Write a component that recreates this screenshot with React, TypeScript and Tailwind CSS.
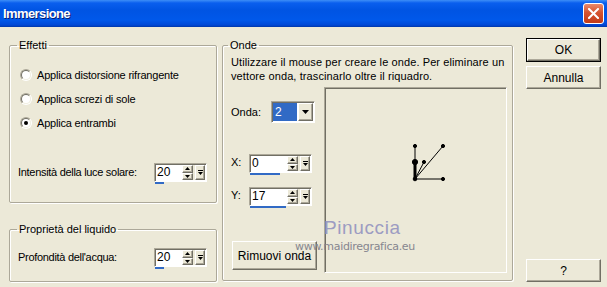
import React from "react";

const raised =
  "border border-t-white border-l-white border-b-[#716f64] border-r-[#716f64] shadow-[inset_-1px_-1px_0_#aca899]";
const sunken =
  "border border-t-[#aca899] border-l-[#aca899] border-b-white border-r-white shadow-[inset_1px_1px_0_#716f64]";

function Up() {
  return (
    <svg width="5" height="3" viewBox="0 0 5 3">
      <path d="M2.5 0 L5 3 L0 3 Z" fill="#000" />
    </svg>
  );
}
function Down() {
  return (
    <svg width="5" height="3" viewBox="0 0 5 3">
      <path d="M0 0 L5 0 L2.5 3 Z" fill="#000" />
    </svg>
  );
}

function Spin({ w, bar, value }: { w: string; bar: string; value: string }) {
  return (
    <div className="flex flex-col">
      <div className={`flex h-[19px] ${w} ${sunken} bg-white`}>
        <span className="flex-1 pl-[2px] text-[12px] leading-[17px] text-black">{value}</span>
        <div className="flex flex-col w-[11px] my-[1px]">
          <div className={`flex-1 ${raised} bg-[#ece9d8] flex items-center justify-center`}>
            <Up />
          </div>
          <div className={`flex-1 ${raised} bg-[#ece9d8] flex items-center justify-center`}>
            <Down />
          </div>
        </div>
        <div className="w-[2px] bg-[#ece9d8] my-[1px]" />
        <div className={`w-[10px] my-[1px] mr-[1px] ${raised} bg-[#ece9d8] flex flex-col items-center justify-center gap-[1px]`}>
          <div className="w-[5px] h-[1px] bg-black" />
          <Down />
        </div>
      </div>
      <div className={`h-[2px] bg-[#316ac5] ${bar} ml-[1px]`} />
    </div>
  );
}

function Radio({ label, checked }: { label: string; checked?: boolean }) {
  return (
    <div className="flex items-center h-[24px] pl-[10px]">
      <div className="w-[12px] h-[12px] rounded-full border border-t-[#aca899] border-l-[#aca899] border-b-white border-r-white bg-[#ece9d8] flex items-center justify-center">
        <div className="w-[10px] h-[10px] rounded-full border border-t-[#716f64] border-l-[#716f64] border-b-[#f1efe2] border-r-[#f1efe2] bg-white flex items-center justify-center">
          {checked && <div className="w-[4px] h-[4px] rounded-full bg-black" />}
        </div>
      </div>
      <span className="ml-[5px] tracking-[-0.2px]">{label}</span>
    </div>
  );
}

const groupCls =
  "border border-[#aca899] shadow-[inset_1px_1px_0_#fff,1px_1px_0_#fff] rounded-[2px]";

export default function App() {
  return (
    <div className="w-[607px] h-[287px] bg-[#ece9d8] font-['Liberation_Sans',Arial,sans-serif] text-[11px] text-black overflow-hidden relative">
      {/* Title bar */}
      <div className="h-[27px] flex items-center justify-between bg-[linear-gradient(180deg,#3d8ef7_0px,#0a5fee_3px,#0054e3_10px,#0058ea_20px,#0048d6_25px,#0036a8_27px)]">
        <span className="pl-[3px] text-white font-bold text-[13px] tracking-[-0.6px] [text-shadow:1px_1px_0_#0a1e70]">
          Immersione
        </span>
        <div className="mr-[3px] w-[21px] h-[21px] rounded-[3px] border border-white bg-[linear-gradient(180deg,#e98a6c,#d6532f_45%,#c23b17)] flex items-center justify-center">
          <svg width="11" height="11" viewBox="0 0 11 11">
            <path d="M1 1 L10 10 M10 1 L1 10" stroke="#fff" strokeWidth="2" strokeLinecap="square" />
          </svg>
        </div>
      </div>

      {/* Body */}
      <div className="flex pt-[11px] pl-[9px]">
        {/* Left column */}
        <div className="flex flex-col w-[208px]">
          <fieldset className={`${groupCls} h-[165px]`}>
            <legend className="ml-[7px] px-[2px] leading-[14px]">Effetti</legend>
            <div className="flex flex-col mt-[11px]">
              <Radio label="Applica distorsione rifrangente" />
              <Radio label="Applica screzi di sole" />
              <Radio label="Applica entrambi" checked />
            </div>
            <div className="flex items-start mt-[28px] pl-[8px]">
              <span className="leading-[19px] w-[136px] tracking-[-0.3px]">Intensità della luce solare:</span>
              <Spin w="w-[53px]" bar="w-[9px]" value="20" />
            </div>
          </fieldset>
          <fieldset className={`${groupCls} h-[60px] mt-[19px] shrink-0`}>
            <legend className="ml-[7px] px-[2px] leading-[14px]">Proprietà del liquido</legend>
            <div className="flex items-start mt-[12px] pl-[8px]">
              <span className="leading-[19px] w-[136px] tracking-[-0.3px]">Profondità dell'acqua:</span>
              <Spin w="w-[53px]" bar="w-[9px]" value="20" />
            </div>
          </fieldset>
        </div>

        {/* Middle group */}
        <fieldset className={`${groupCls} ml-[5px] w-[291px] h-[243px] shrink-0`}>
          <legend className="ml-[5px] px-[2px] leading-[14px]">Onde</legend>
          <div className="pl-[8px] mt-[3px] leading-[14px] tracking-[0.1px]">
            Utilizzare il mouse per creare le onde. Per eliminare un
            <br />
            vettore onda, trascinarlo oltre il riquadro.
          </div>
          <div className="flex mt-[4px] pl-[8px]">
            <div className="flex flex-col w-[93px]">
              <div className="flex items-center mt-[14px] h-[22px]">
                <span className="w-[40px]">Onda:</span>
                <div className={`flex w-[44px] h-[22px] ${sunken} bg-white p-[1px]`}>
                  <div className="w-[24px] bg-[#316ac5] text-white text-[12px] leading-[18px] pl-[2px]">2</div>
                  <div className={`flex-1 ml-[1px] ${raised} bg-[#ece9d8] flex items-center justify-center`}>
                    <svg width="7" height="4" viewBox="0 0 7 4">
                      <path d="M0 0 L7 0 L3.5 4 Z" fill="#000" />
                    </svg>
                  </div>
                </div>
              </div>
              <div className="flex items-start mt-[31px]">
                <span className="w-[18px] leading-[17px]">X:</span>
                <Spin w="w-[63px]" bar="w-[30px]" value="0" />
              </div>
              <div className="flex items-start mt-[12px]">
                <span className="w-[18px] leading-[17px]">Y:</span>
                <Spin w="w-[63px]" bar="w-[36px]" value="17" />
              </div>
              <button className={`mt-[33px] ml-[1px] w-[85px] h-[29px] ${raised} bg-[#ece9d8] text-[12px]`}>
                Rimuovi onda
              </button>
            </div>
            <div className={`w-[183px] h-[186px] ${sunken} bg-[#ece9d8]`}>
              <svg width="181" height="184" viewBox="0 0 181 184">
                <g stroke="#000" fill="#000">
                  <line x1="90" y1="91" x2="90" y2="58" strokeWidth="1" />
                  <line x1="90" y1="91" x2="90" y2="74" strokeWidth="3" />
                  <line x1="90" y1="91" x2="118" y2="58" strokeWidth="1" />
                  <line x1="90" y1="91" x2="99" y2="74" strokeWidth="1" />
                  <line x1="90" y1="91" x2="118" y2="91" strokeWidth="1" />
                  <circle cx="90" cy="58" r="1.6" />
                  <circle cx="118" cy="58" r="1.6" />
                  <circle cx="99" cy="74" r="1.6" />
                  <circle cx="118" cy="91" r="1.6" />
                  <circle cx="90" cy="91" r="1.8" />
                  <circle cx="90" cy="74" r="2.6" />
                </g>
              </svg>
            </div>
          </div>
        </fieldset>

        {/* Right buttons */}
        <div className="flex flex-col ml-[13px] w-[75px] h-[244px]">
          <div className="border border-black h-[24px]">
            <button className={`w-full h-full ${raised} bg-[#ece9d8] text-[12px]`}>OK</button>
          </div>
          <button className={`mt-[4px] h-[23px] ${raised} bg-[#ece9d8] text-[12px]`}>Annulla</button>
          <button className={`mt-auto h-[23px] ${raised} bg-[#ece9d8] text-[12px]`}>?</button>
        </div>
      </div>

      {/* Watermark */}
      <div className="absolute left-[324px] top-[218px] text-[19px] leading-[20px] text-[#9c9cc2] tracking-[0.6px] font-['Liberation_Sans',sans-serif] pointer-events-none">
        Pinuccia
      </div>
      <div className="absolute left-[295px] top-[241px] text-[11px] leading-[12px] text-[#86868f] font-['DejaVu_Sans',sans-serif] tracking-[-0.3px] pointer-events-none">
        www.maidiregrafica.eu
      </div>
    </div>
  );
}
